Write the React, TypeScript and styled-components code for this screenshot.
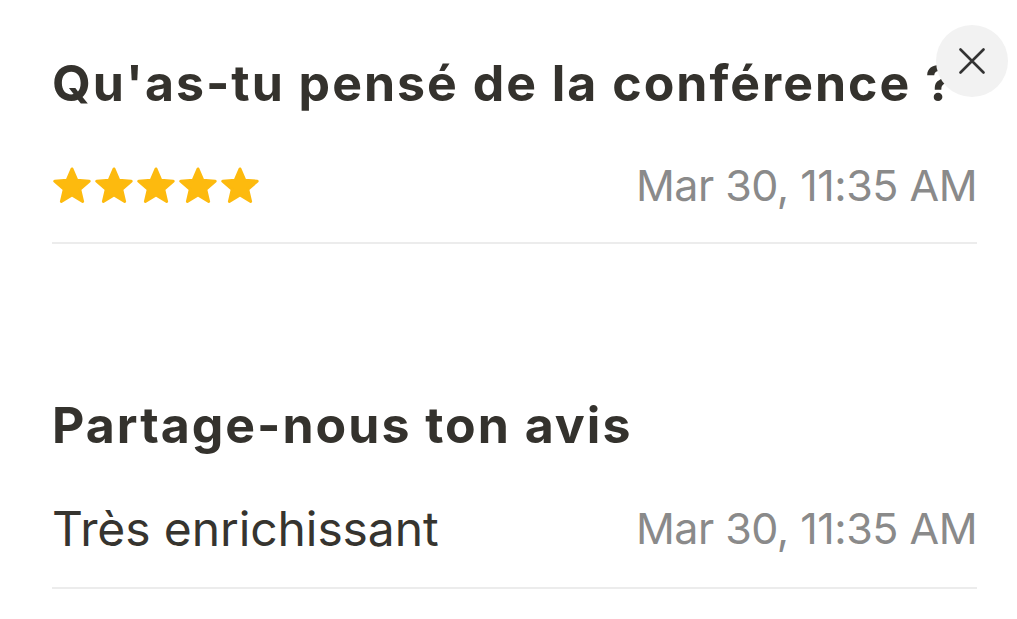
import React from "react";
import styled, { createGlobalStyle } from "styled-components";

const Global = createGlobalStyle`
  html, body {
    margin: 0;
    padding: 0;
    background: #ffffff;
  }
  body {
    font-family: Inter, "Noto Sans", "Liberation Sans", sans-serif;
    -webkit-font-smoothing: antialiased;
  }
`;

const Sheet = styled.div`
  position: relative;
  width: 1017px;
  height: 619px;
  box-sizing: border-box;
  padding: 53px 40px 0 52px;
  overflow: hidden;
  background: #ffffff;
`;

const CloseButton = styled.button`
  position: absolute;
  top: 25px;
  right: 9px;
  width: 72px;
  height: 72px;
  border: none;
  border-radius: 50%;
  background: #f2f2f2;
  display: flex;
  align-items: center;
  justify-content: center;
  padding: 0;
  cursor: pointer;
`;

const Section = styled.section<{ $gapTop?: number }>`
  display: flex;
  flex-direction: column;
  margin-top: ${(p) => p.$gapTop ?? 0}px;
`;

const Heading = styled.h2`
  margin: 0;
  font-size: 50px;
  line-height: 60px;
  font-weight: 700;
  color: #34322d;
  white-space: nowrap;
  letter-spacing: 2px;
`;

const Row = styled.div<{ $height: number; $gapTop: number }>`
  display: flex;
  align-items: center;
  justify-content: space-between;
  height: ${(p) => p.$height}px;
  margin-top: ${(p) => p.$gapTop}px;
`;

const Stars = styled.div`
  display: flex;
  align-items: center;
  gap: 4px;
  margin-left: 1px;
`;

const Answer = styled.span`
  font-size: 48px;
  font-weight: 400;
  color: #36342f;
  letter-spacing: -0.1px;
`;

const DateText = styled.span`
  font-size: 43px;
  font-weight: 400;
  color: #8a8a8a;
  letter-spacing: -0.5px;
`;

const Divider = styled.hr<{ $gapTop: number }>`
  margin: ${(p) => p.$gapTop}px 0 0 0;
  border: none;
  height: 2px;
  background: #ececec;
`;

const Star: React.FC = () => (
  <svg width="38" height="37" viewBox="0 0 24 23.4">
    <path
      d="M12 1.2L15.06 8.29L22.94 8.95L16.95 14.11L18.76 21.8L12 17.7L5.24 21.8L7.05 14.11L1.06 8.95L8.94 8.29Z"
      fill="#FDBA0E"
      stroke="#FDBA0E"
      strokeWidth="1.8"
      strokeLinejoin="round"
    />
  </svg>
);

const CloseIcon: React.FC = () => (
  <svg width="26" height="26" viewBox="0 0 26 26">
    <path
      d="M1.5 1.5L24.5 24.5M24.5 1.5L1.5 24.5"
      stroke="#333333"
      strokeWidth="2.6"
      strokeLinecap="round"
    />
  </svg>
);

export default function App() {
  return (
    <>
      <Global />
      <Sheet>
        <Section>
          <Heading>Qu'as-tu pensé de la conférence ?</Heading>
          <Row $height={50} $gapTop={47}>
            <Stars>
              {[0, 1, 2, 3, 4].map((i) => (
                <Star key={i} />
              ))}
            </Stars>
            <DateText>Mar 30, 11:35 AM</DateText>
          </Row>
          <Divider $gapTop={32} />
        </Section>
        <Section $gapTop={151}>
          <Heading>Partage-nous ton avis</Heading>
          <Row $height={56} $gapTop={45}>
            <Answer>Très enrichissant</Answer>
            <DateText>Mar 30, 11:35 AM</DateText>
          </Row>
          <Divider $gapTop={31} />
        </Section>
        <CloseButton aria-label="Fermer">
          <CloseIcon />
        </CloseButton>
      </Sheet>
    </>
  );
}
